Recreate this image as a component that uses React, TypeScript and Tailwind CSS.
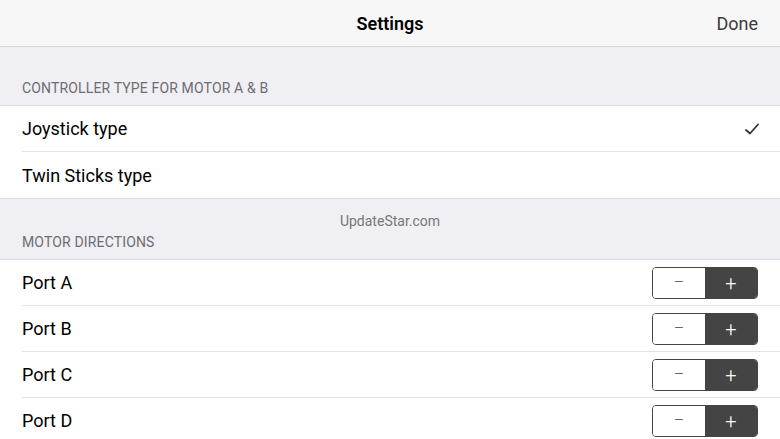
import React from "react";

const font = { fontFamily: "Roboto, 'Noto Sans', sans-serif" };

function Row({ label, right, last }: { label: string; right?: React.ReactNode; last?: boolean }) {
  return (
    <div className="bg-white pl-[22px]">
      <div className={`flex h-[46px] items-center pr-[22px] ${last ? "" : "border-b border-[#e3e3e6]"}`}>
        <span className="text-[18px] text-black">{label}</span>
        <div className="ml-auto flex items-center">{right}</div>
      </div>
    </div>
  );
}

function Stepper() {
  return (
    <div className="flex h-[32px] w-[106px] overflow-hidden rounded-[4px] border border-[#444]">
      <div className="flex flex-1 items-center justify-center bg-white text-[16px] font-light text-[#555]">–</div>
      <div className="flex flex-1 items-center justify-center bg-[#444] text-[20px] font-light text-white">+</div>
    </div>
  );
}

export default function App() {
  return (
    <div className="h-[439px] w-[780px] overflow-hidden bg-[#efeff4]" style={font}>
      <div className="relative flex h-[47px] items-center justify-center border-b border-[#d6d6da] bg-[#f7f7f7]">
        <span className="text-[18px] font-semibold text-black">Settings</span>
        <span className="absolute right-[22px] text-[18px] text-[#3a3a3a]">Done</span>
      </div>
      <div className="flex h-[58px] items-end px-[22px] pb-[6px]">
        <span className="text-[14px] tracking-[0.15px] text-[#6d6d72]">CONTROLLER TYPE FOR MOTOR A &amp; B</span>
      </div>
      <div className="border-y border-[#dcdce0]">
        <Row
          label="Joystick type"
          right={
            <svg width="16" height="14" viewBox="0 0 16 14" className="mr-[-2px]">
              <path d="M2 8 L6 11.5 L14 2.5" fill="none" stroke="#333" strokeWidth="1.8" strokeLinecap="round" strokeLinejoin="round" />
            </svg>
          }
        />
        <Row label="Twin Sticks type" last />
      </div>
      <div className="flex h-[60px] flex-col px-[22px]">
        <div className="pt-[12px] text-center text-[14px] text-[#777]">UpdateStar.com</div>
        <div className="mt-auto pb-[6px] text-[14px] tracking-[0.15px] text-[#6d6d72]">MOTOR DIRECTIONS</div>
      </div>
      <div className="border-t border-[#dcdce0]">
        <Row label="Port A" right={<Stepper />} />
        <Row label="Port B" right={<Stepper />} />
        <Row label="Port C" right={<Stepper />} />
        <Row label="Port D" right={<Stepper />} />
      </div>
    </div>
  );
}
